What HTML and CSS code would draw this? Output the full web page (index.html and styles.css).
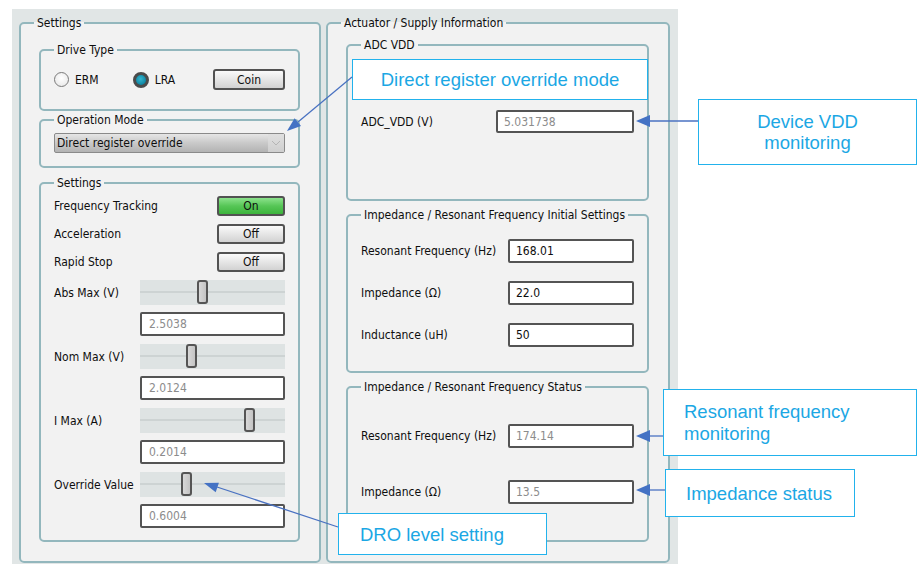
FILE: index.html
```html
<!DOCTYPE html>
<html lang="en">
<head>
  <meta charset="UTF-8">
  <meta name="viewport" content="width=device-width, initial-scale=1.0">
  <title>Haptic Driver Settings</title>
  <link rel="stylesheet" href="styles.css">
</head>
<body>
  <div class="app">
    <!-- Left column: drive settings -->
    <fieldset class="group outer left-col">
      <legend>Settings</legend>

      <fieldset class="group drive">
        <legend>Drive Type</legend>
        <div class="drive-row">
          <label class="radio erm"><input type="radio" name="drive">ERM</label>
          <label class="radio lra"><input type="radio" name="drive" checked>LRA</label>
          <button class="btn coin">Coin</button>
        </div>
      </fieldset>

      <fieldset class="group mode">
        <legend>Operation Mode</legend>
        <div class="select">
          <span>Direct register override</span>
          <span class="caret">
            <svg width="10" height="6" viewBox="0 0 10 6"><polyline points="1,1 5,5 9,1" fill="none" stroke="#b5b5b5" stroke-width="1"/></svg>
          </span>
        </div>
      </fieldset>

      <fieldset class="group settings">
        <legend>Settings</legend>
        <div class="row btn-row"><span class="label">Frequency Tracking</span><button class="btn toggle on">On</button></div>
        <div class="row btn-row"><span class="label">Acceleration</span><button class="btn toggle">Off</button></div>
        <div class="row btn-row"><span class="label">Rapid Stop</span><button class="btn toggle">Off</button></div>

        <div class="row slider-row"><span class="label">Abs Max (V)</span><input type="range" class="slider" min="0" max="134" value="57"></div>
        <div class="row field-row"><input class="field small readonly" value="2.5038" readonly></div>

        <div class="row slider-row"><span class="label">Nom Max (V)</span><input type="range" class="slider" min="0" max="134" value="46"></div>
        <div class="row field-row"><input class="field small readonly" value="2.0124" readonly></div>

        <div class="row slider-row"><span class="label">I Max (A)</span><input type="range" class="slider" min="0" max="134" value="104"></div>
        <div class="row field-row"><input class="field small readonly" value="0.2014" readonly></div>

        <div class="row slider-row"><span class="label">Override Value</span><input type="range" class="slider" min="0" max="134" value="41"></div>
        <div class="row field-row"><input class="field small readonly" value="0.6004" readonly></div>
      </fieldset>
    </fieldset>

    <!-- Right column: actuator info -->
    <fieldset class="group outer right-col">
      <legend>Actuator / Supply Information</legend>

      <fieldset class="group adc">
        <legend>ADC VDD</legend>
        <div class="info-row"><span>ADC_VDD (V)</span><input class="field wide readonly" value="5.031738" readonly></div>
      </fieldset>

      <fieldset class="group initial">
        <legend>Impedance / Resonant Frequency Initial Settings</legend>
        <div class="info-row"><span>Resonant Frequency (Hz)</span><input class="field" value="168.01"></div>
        <div class="info-row"><span>Impedance (&Omega;)</span><input class="field" value="22.0"></div>
        <div class="info-row"><span>Inductance (uH)</span><input class="field" value="50"></div>
      </fieldset>

      <fieldset class="group status">
        <legend>Impedance / Resonant Frequency Status</legend>
        <div class="info-row"><span>Resonant Frequency (Hz)</span><input class="field readonly" value="174.14" readonly></div>
        <div class="info-row"><span>Impedance (&Omega;)</span><input class="field readonly" value="13.5" readonly></div>
      </fieldset>
    </fieldset>
  </div>

  <!-- Annotations -->
  <div class="callout c-mode">Direct register override mode</div>
  <div class="callout c-vdd">Device VDD<br>monitoring</div>
  <div class="callout c-freq">Resonant frequency<br>monitoring</div>
  <div class="callout c-imp">Impedance status</div>
  <div class="callout c-dro">DRO level setting</div>

  <svg class="arrows" width="917" height="564" viewBox="0 0 917 564">
    <g stroke="#4a72c2" stroke-width="1.3" fill="none">
      <line x1="352" y1="77" x2="298" y2="122"/>
      <line x1="698" y1="121" x2="648" y2="121"/>
      <line x1="663" y1="436" x2="648" y2="436"/>
      <line x1="665" y1="490" x2="648" y2="490"/>
      <line x1="338" y1="527" x2="217" y2="487"/>
    </g>
    <g fill="#4472c4">
      <polygon points="287,131 301,125.9 294.6,118.3"/>
      <polygon points="636,121 650,115 650,127"/>
      <polygon points="636,436 650,430 650,442"/>
      <polygon points="636,490 650,484 650,496"/>
      <polygon points="204,483 218.9,482.7 215.7,492.2"/>
    </g>
  </svg>
</body>
</html>
```

FILE: styles.css
```css
body {
  margin: 0;
  width: 917px;
  height: 564px;
  overflow: hidden;
  position: relative;
  background-color: #fff;
  font-family: "DejaVu Sans Condensed", "DejaVu Sans", sans-serif;
  font-stretch: condensed;
  font-size: 12px;
  color: #0e0e0e;
}

.app {
  box-sizing: border-box;
  margin: 9px 0 0 12px;
  width: 666px;
  height: 555px;
  padding: 7px 0 1px 7px;
  display: flex;
  gap: 5px;
  background-color: #e1e6e6;
}

/* Group boxes */
.group {
  margin: 0;
  min-width: 0;
  border: 2px solid #93b7bd;
  border-radius: 5px;
  background-color: #f2f2f2;
}

.group legend {
  padding: 1px 3px 0 3px;
  line-height: 13px;
  font-size: 12px;
}

.left-col {
  width: 302px;
  box-sizing: border-box;
  padding: 13px 19px 0 18px;
}

.right-col {
  width: 344px;
  box-sizing: border-box;
  padding: 8px 19px 0 18px;
}

.outer > legend {
  margin-left: -5px;
}

.drive {
  padding: 12px 13px 19px 13px;
}

.mode {
  margin-top: 2px;
  padding: 6px 13px 13px 13px;
}

.settings {
  margin-top: 8px;
  padding: 6px 13px 12px 13px;
}

/* Drive type row */
.drive-row {
  display: flex;
  align-items: center;
  height: 21px;
}

.radio {
  display: flex;
  align-items: center;
  gap: 6px;
}

.radio.lra {
  margin-left: 34px;
}

.radio input {
  -webkit-appearance: none;
  appearance: none;
  margin: 0;
  width: 15px;
  height: 15px;
  border-radius: 50%;
  border: 1px solid #7a7a7a;
  background: radial-gradient(circle at 50% 40%, #ffffff, #e4e4e4);
}

.radio input:checked {
  width: 16px;
  height: 16px;
  border: 3px solid #4b4b4b;
  background: radial-gradient(circle at 45% 40%, #35b6cf, #0f86a3 70%);
}

/* Buttons */
.btn {
  box-sizing: border-box;
  height: 20px;
  padding: 0;
  font-family: inherit;
  font-size: 12px;
  color: #0e0e0e;
  border: 2px solid #525252;
  border-radius: 3px;
  background: linear-gradient(#fafafa, #e4e4e4 55%, #d2d2d2);
  cursor: pointer;
}

.coin {
  margin-left: auto;
  width: 72px;
  height: 21px;
}

.toggle {
  margin-left: auto;
  width: 68px;
}

.toggle.on {
  background: linear-gradient(#8ce28c, #56c656 50%, #3cb43c);
}

/* Combo box */
.select {
  box-sizing: border-box;
  height: 20px;
  display: flex;
  align-items: center;
  justify-content: space-between;
  padding-left: 2px;
  border: 1px solid #8a8a8a;
  border-radius: 2px;
  background: linear-gradient(#e6e6e6, #c9c9c9 50%, #b3b3b3);
}

.caret {
  width: 16px;
  height: 18px;
  display: flex;
  align-items: center;
  justify-content: center;
  background: linear-gradient(#e0e0e0, #cfcfcf);
}

/* Settings rows */
.row {
  display: flex;
  align-items: center;
}

.row .label {
  width: 86px;
  flex: none;
  white-space: nowrap;
}

.btn-row {
  height: 20px;
  margin-bottom: 8px;
}

.slider-row {
  height: 25px;
  margin-bottom: 7px;
}

.field-row {
  height: 24px;
  margin-bottom: 8px;
  padding-left: 86px;
}

.field-row:last-child {
  margin-bottom: 0;
}

.slider {
  -webkit-appearance: none;
  appearance: none;
  margin: 0;
  width: 145px;
  height: 25px;
  background-color: #dee3e3;
}

.slider::-webkit-slider-runnable-track {
  height: 25px;
  background: linear-gradient(transparent 11px, #cdd3d3 11px, #cdd3d3 13px, transparent 13px);
}

.slider::-webkit-slider-thumb {
  -webkit-appearance: none;
  box-sizing: border-box;
  width: 11px;
  height: 24px;
  margin-top: 0;
  border: 2px solid #555;
  border-radius: 3px;
  background: linear-gradient(90deg, #d8d8d8, #c4c4c4);
}

/* Text fields */
.field {
  box-sizing: border-box;
  width: 126px;
  height: 24px;
  margin: 0;
  padding: 0 6px;
  font-family: inherit;
  font-size: 12px;
  color: #0e0e0e;
  border: 2px solid #545454;
  border-radius: 2px;
  background-color: #fff;
  outline: none;
}

.field.small {
  width: 145px;
  padding-left: 7px;
}

.field.wide {
  width: 138px;
  height: 23px;
}

.field.readonly {
  color: #8c8c8c;
}

/* Right column rows */
.info-row {
  display: flex;
  align-items: center;
  justify-content: space-between;
}

.adc {
  box-sizing: border-box;
  height: 163px;
  padding: 58px 13px 0 13px;
}

.initial {
  margin-top: 7px;
  padding: 17px 13px 24px 13px;
}

.initial .info-row + .info-row {
  margin-top: 18px;
}

.status {
  box-sizing: border-box;
  height: 162px;
  margin-top: 7px;
  padding: 30px 13px 0 13px;
}

.status .info-row + .info-row {
  margin-top: 32px;
}

/* Annotation callouts */
.callout {
  position: absolute;
  box-sizing: border-box;
  display: flex;
  align-items: center;
  background-color: #fff;
  border: 1.5px solid #22b2ec;
  color: #1ba7e4;
  font-family: "Liberation Sans", Arial, sans-serif;
  font-stretch: normal;
  font-size: 18.5px;
  line-height: 21px;
}

.c-mode {
  left: 352px;
  top: 59px;
  width: 296px;
  height: 41px;
  justify-content: center;
}

.c-vdd {
  left: 698px;
  top: 99px;
  width: 219px;
  height: 66px;
  justify-content: center;
  text-align: center;
}

.c-freq {
  left: 663px;
  top: 389px;
  width: 254px;
  height: 67px;
  padding-left: 20px;
  line-height: 22px;
}

.c-imp {
  left: 665px;
  top: 469px;
  width: 190px;
  height: 48px;
  padding-left: 20px;
}

.c-dro {
  left: 338px;
  top: 513px;
  width: 209px;
  height: 42px;
  padding-left: 21px;
}

.arrows {
  position: absolute;
  left: 0;
  top: 0;
  pointer-events: none;
}
```
